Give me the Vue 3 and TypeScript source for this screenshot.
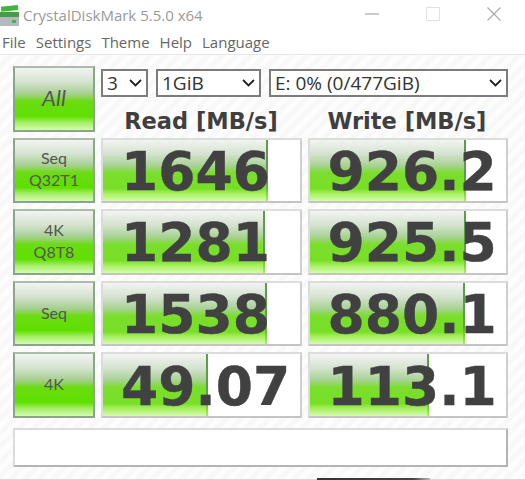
<script setup lang="ts">
interface Row { label: string[]; read: string; readPct: number; write: string; writePct: number }
const rows: Row[] = [
  { label: ['Seq', 'Q32T1'], read: '1646', readPct: 84, write: '926.2', writePct: 79.7 },
  { label: ['4K', 'Q8T8'], read: '1281', readPct: 82.2, write: '925.5', writePct: 79.5 },
  { label: ['Seq'], read: '1538', readPct: 83.3, write: '880.1', writePct: 79.2 },
  { label: ['4K'], read: '49.07', readPct: 53.3, write: '113.1', writePct: 60.9 },
]
</script>

<template>
  <div class="window">
    <header class="titlebar">
      <svg class="logo" width="20" height="24" viewBox="0 0 20 24">
        <rect x="1" y="3" width="17" height="5" fill="#3fb53f" transform="rotate(-6 9 5)" />
        <rect x="0" y="9" width="19" height="5" fill="#4a9a4a" />
        <rect x="0" y="14" width="19" height="9" fill="#b5b9bd" />
        <rect x="12" y="17" width="4" height="3" fill="#4caf50" />
      </svg>
      <span class="app-title">CrystalDiskMark 5.5.0 x64</span>
      <span class="spacer"></span>
      <div class="win-controls">
        <svg width="14" height="14" viewBox="0 0 14 14"><path d="M0 7H14" stroke="#a8a8a8" stroke-width="1.2" /></svg>
        <svg width="14" height="14" viewBox="0 0 14 14"><rect x="0.5" y="0.5" width="13" height="13" fill="none" stroke="#e2e2e2" /></svg>
        <svg width="14" height="14" viewBox="0 0 14 14"><path d="M0.5 0.5L13.5 13.5M13.5 0.5L0.5 13.5" stroke="#a8a8a8" stroke-width="1.1" /></svg>
      </div>
    </header>
    <nav class="menubar">
      <span>File</span><span>Settings</span><span>Theme</span><span>Help</span><span>Language</span>
    </nav>
    <main class="content">
      <div class="top-row">
        <button class="test-btn all">All</button>
        <div class="controls">
          <div class="selects">
            <div class="select s-count"><span>3</span><svg width="13" height="8" viewBox="0 0 13 8"><path d="M1 1L6.5 6.5L12 1" fill="none" stroke="#222" stroke-width="1.8" /></svg></div>
            <div class="select s-size"><span>1GiB</span><svg width="13" height="8" viewBox="0 0 13 8"><path d="M1 1L6.5 6.5L12 1" fill="none" stroke="#222" stroke-width="1.8" /></svg></div>
            <div class="select s-drive"><span>E: 0% (0/477GiB)</span><svg width="13" height="8" viewBox="0 0 13 8"><path d="M1 1L6.5 6.5L12 1" fill="none" stroke="#222" stroke-width="1.8" /></svg></div>
          </div>
          <div class="headings"><span>Read [MB/s]</span><span>Write [MB/s]</span></div>
        </div>
      </div>
      <div v-for="row in rows" :key="row.read" class="row">
        <button class="test-btn">
          <span v-for="line in row.label" :key="line">{{ line }}</span>
        </button>
        <div class="score">
          <div class="fill" :style="{ width: row.readPct + '%' }"></div>
          <span class="value">{{ row.read }}</span>
        </div>
        <div class="score">
          <div class="fill" :style="{ width: row.writePct + '%' }"></div>
          <span class="value">{{ row.write }}</span>
        </div>
      </div>
      <div class="message"></div>
    </main>
    <div class="edge-shadow"></div>
  </div>
</template>

<style>
html, body { margin: 0; background: #fff; }
</style>

<style scoped>
.window { position: relative; width: 525px; height: 480px; display: flex; flex-direction: column; overflow: hidden; font-family: "Open Sans", "Noto Sans", sans-serif; color: #555; }
.titlebar { height: 29px; display: flex; align-items: center; flex: none; }
.logo { margin-right: 3px; }
.app-title { font-size: 15px; color: #9a9a9a; }
.spacer { flex: 1; }
.win-controls { display: flex; gap: 47px; margin-right: 24px; margin-bottom: 2px; }
.menubar { height: 25px; display: flex; gap: 10px; align-items: center; font-size: 15px; padding-left: 2px; color: #666; border-bottom: 1px solid #e6e6e6; flex: none; box-sizing: content-box; }
.content { flex: 1; padding: 11px 17px 0 13px; display: flex; flex-direction: column; gap: 6px; background: repeating-linear-gradient(135deg, #fdfdfd 0 5px, #f8f8f8 5px 10px); border-bottom: 1px solid #d8d8d8; }
.top-row { display: flex; gap: 6px; height: 65.6px; }
.row { display: flex; gap: 6px; height: 65.6px; }
.test-btn { width: 82px; height: 65.6px; flex: none; box-sizing: border-box; border: 2px solid #8ba58b; border-top-color: #a9bda9; padding: 0 0 2px; display: flex; flex-direction: column; align-items: center; justify-content: center; background: linear-gradient(#f2f4f1 0%, #d6e3d1 22%, #a6cf90 42%, #6adc10 54%, #5fe000 78%, #a6ee68 88%, #d4fbb0 100%); font-family: "Lato", "Noto Sans", sans-serif; font-size: 16px; color: #555; line-height: 22px; }
.test-btn.all { font-size: 22px; font-style: italic; color: #555; }
.controls { flex: 1; display: flex; flex-direction: column; }
.selects { display: flex; gap: 8px; margin-top: 3px; }
.select { box-sizing: border-box; height: 28px; border: 2px solid #7c7c7c; background: #fff; display: flex; align-items: center; justify-content: space-between; padding: 0 4px; font-size: 19px; color: #333; }
.s-count { width: 47px; }
.s-size { width: 105px; }
.s-drive { width: 239px; }
.headings { display: flex; gap: 6px; font-family: "DejaVu Sans", sans-serif; font-weight: 700; font-size: 22.5px; color: #3f3f3f; margin-top: 9px; line-height: 30px; }
.headings span { width: 200px; text-align: center; }
.score { position: relative; width: 200.5px; height: 65.6px; box-sizing: border-box; border: 2px solid #dcdcdc; border-bottom-color: #c4c4c4; border-right-color: #cfcfcf; background: #fff; overflow: hidden; display: flex; align-items: center; padding: 3px 0 0 18px; }
.fill { position: absolute; left: 0; top: 0; bottom: 0; background: linear-gradient(#f2f4f1 0%, #d6e3d1 22%, #a8d294 42%, #7ade2c 54%, #78df26 80%, #a8f060 88%, #d4fbb0 100%); }
.fill::after { content: ""; position: absolute; right: 0; top: 0; bottom: 0; width: 2px; background: linear-gradient(#5c9c4c 0%, #5c9c4c 70%, #7fe030 90%, #a8f060 100%); }
.value { position: relative; font-family: "DejaVu Sans", sans-serif; font-weight: 700; font-size: 53.5px; color: #414141; line-height: 60px; white-space: nowrap; -webkit-text-stroke: 0.4px #414141; }
.message { height: 39px; box-sizing: border-box; border: 2px solid #dcdcdc; border-bottom-color: #b4b4b4; border-right-color: #b4b4b4; background: #fff; margin-top: 4px; width: 495px; }
.edge-shadow { position: absolute; left: 317px; bottom: 0; width: 113px; height: 2px; background: linear-gradient(90deg, #333 0%, #444 85%, #bbb 100%); }
</style>
